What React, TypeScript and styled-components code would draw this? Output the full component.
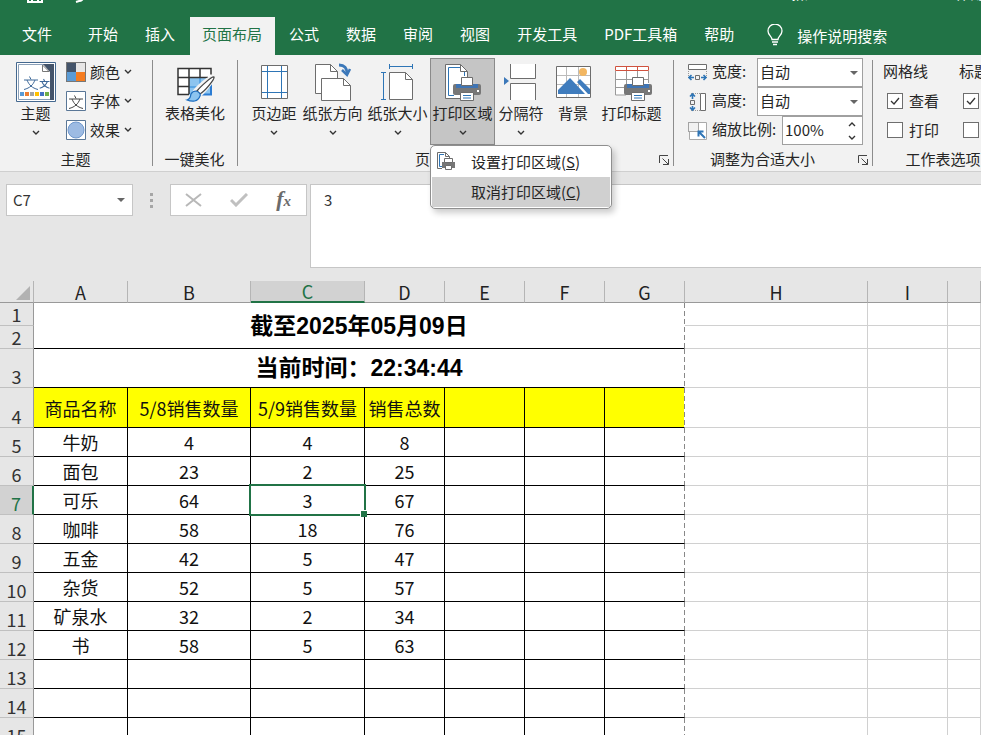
import React from 'react';
import styled, { createGlobalStyle, css } from 'styled-components';

const GREEN = '#217346';
const BLUE = '#2e75b6';
const GREY = '#6d6d6d';

const Global = createGlobalStyle`
  * { box-sizing: border-box; }
  body { margin: 0; background: #e6e6e6; }
  body, button, input, select { font-family: "Noto Sans CJK SC", "Noto Sans", sans-serif; }
  button { border: 0; padding: 0; background: none; color: inherit; font-size: inherit; }
`;

const Window = styled.div`
  display: flex; flex-direction: column; height: 100vh; overflow: hidden;
  font-size: 15px; line-height: 22px; color: #262626;
`;
const TitleBar = styled.header`
  display: flex; align-items: flex-end; flex: none; height: 17px; padding: 0 0 14px 27px;
  overflow: hidden; background: ${GREEN}; color: #fff; white-space: nowrap;
`;
const QuickTools = styled.div`display: flex; align-items: flex-end; gap: 28px; flex: 1;`;
const DocName = styled.span`width: 150px; line-height: 20px;`;
const AppName = styled.span`width: 41px; line-height: 20px;`;

const Tabs = styled.nav`
  display: flex; flex: none; height: 38px; background: ${GREEN}; color: #fff; white-space: nowrap;
`;
const Tab = styled.button<{ $active?: boolean }>`
  display: flex; justify-content: center; flex: none; height: 38px; padding: 2px 13px 0 14px; line-height: 30px;
  ${p => p.$active && css`background: #f2f2f2; color: ${GREEN}; margin-left: 2px; padding: 2px 13px 0 12px;`}
  &:first-child { padding: 2px 22px 0 22px; }
`;
const Search = styled.button`display: flex; align-items: center; gap: 14px; height: 36px; padding-left: 20px;`;

const Ribbon = styled.section`
  display: flex; flex: none; height: 117px; background: #f2f2f2;
  border-bottom: 1px solid #cfcfcf; white-space: nowrap;
`;
const Group = styled.div<{ $w: number }>`
  position: relative; display: flex; flex-direction: column; flex: none; width: ${p => p.$w}px;
  &::after { content: ''; position: absolute; right: 0; top: 5px; bottom: 5px; width: 1px; background: #8c8c8c; }
`;
const GroupBody = styled.div<{ $pad?: number }>`
  display: flex; height: 93px; padding-left: ${p => p.$pad ?? 0}px;
`;
const GroupLabel = styled.div<{ $left?: number; $right?: number }>`
  display: flex; justify-content: center; height: 22px;
  padding-left: ${p => p.$left ?? 0}px; padding-right: ${p => p.$right ?? 0}px;
`;
const Launcher = styled.button`
  position: absolute; right: 4px; bottom: 5px; width: 12px; height: 12px;
  svg { display: block; }
`;
const BigButton = styled.button<{ $w: number; $open?: boolean }>`
  display: flex; flex-direction: column; align-items: center; flex: none;
  width: ${p => p.$w}px; height: 87px; margin-top: 3px; padding-top: 3px; line-height: 22px;
  border: 1px solid ${p => (p.$open ? '#8a8a8a' : 'transparent')};
  background: ${p => (p.$open ? '#c5c5c5' : 'transparent')};
  > svg { flex: none; }
  > span { height: 28px; }
`;
const SmallList = styled.div`display: flex; flex-direction: column; padding: 2px 0 0 9px;`;
const SmallButton = styled.button`
  display: flex; align-items: center; gap: 4px; height: 29px;
`;
const MenuAnchor = styled.div`position: relative; flex: none;`;
const Menu = styled.ul`
  position: absolute; z-index: 5; left: 0; top: 90px; width: 182px; margin: 0; padding: 1px;
  list-style: none; background: #fff; border: 1px solid #8f8f8f; border-radius: 5px;
  box-shadow: 3px 4px 6px rgba(0, 0, 0, .2);
`;
const MenuItem = styled.button<{ $hot?: boolean }>`
  display: flex; align-items: center; width: 100%; height: 30px; padding: 0 0 2px 4px; gap: 13px;
  background: ${p => (p.$hot ? '#d0d0d0' : '#fff')};
`;
const IconSlot = styled.span`display: flex; width: 22px;`;

const FitList = styled.div`display: flex; flex-direction: column; padding: 3px 0 0 14px;`;
const Field = styled.label`
  display: flex; align-items: center; width: 175px; height: 29px; gap: 4px;
  > svg { flex: none; }
`;
const FieldText = styled.span`padding-bottom: 3px;`;
const Box = styled.span<{ $w: number }>`
  display: flex; align-items: center; flex: none; width: ${p => p.$w}px; height: 29px; margin-left: auto;
  background: #fff; border: 1px solid #a0a0a0; padding-right: 4px;
`;
const Select = styled.select`
  appearance: none; flex: 1; min-width: 0; height: 26px; padding: 0 2px 2px; border: 0; background: none;
  font-size: 15px; color: #262626; outline: 0;
`;
const Scale = styled.input`
  flex: 1; min-width: 0; height: 26px; padding: 0 2px 2px; border: 0; background: none; font-size: 15px; color: #262626;
`;
const Spin = styled.span`display: flex; flex-direction: column; gap: 8px; padding-right: 2px;`;

const Options = styled.div`display: flex; padding: 3px 0 0 10px;`;
const OptionCol = styled.div`display: flex; flex-direction: column; width: 76px;`;
const OptionTitle = styled.span`height: 28px; line-height: 26px;`;
const Check = styled.label`
  display: flex; align-items: center; gap: 6px; height: 29px; padding-left: 4px;
`;
const CheckBox = styled.input`
  appearance: none; flex: none; width: 16px; height: 16px; margin: 0; border: 1px solid #6e6e6e; background: #fff;
  &:checked {
    background: #fff url("data:image/svg+xml,%3Csvg xmlns='http://www.w3.org/2000/svg' viewBox='0 0 14 14'%3E%3Cpath d='M3 7l3 3 5-6' fill='none' stroke='%23333' stroke-width='1.3'/%3E%3C/svg%3E");
  }
`;

const FormulaBar = styled.section`
  display: flex; align-items: flex-start; flex: none; height: 109px; padding: 12px 0 0 6px;
`;
const NameBox = styled.div`
  display: flex; align-items: center; width: 127px; height: 32px; padding: 0 7px 0 6px;
  background: #fff; border: 1px solid #c6c6c6;
  input { flex: 1; min-width: 0; padding: 0 0 2px; border: 0; font-size: 15px; color: #333; }
`;
const Dots = styled.span`
  display: flex; flex-direction: column; gap: 3px; width: 37px; padding: 9px 0 0 17px;
  i { width: 3px; height: 3px; background: #a6a6a6; }
`;
const FxTools = styled.div`
  display: flex; align-items: center; justify-content: space-between; width: 137px; height: 32px;
  padding: 0 15px 0 14px; background: #fff; border: 1px solid #c6c6c6; margin-right: 3px;
  svg { display: block; }
`;
const Fx = styled.button`
  && { font: italic bold 22px/26px "Liberation Serif", serif; color: #6b6b6b; }
  small { font-size: 15px; }
`;
const FormulaInput = styled.input`
  flex: 1; min-width: 0; height: 84px; padding: 0 13px 54px; border: 1px solid #c6c6c6; border-right: 0;
  background: #fff; font-size: 15px; color: #333;
`;

const SheetArea = styled.main`flex: 1; min-height: 0; overflow: hidden; background: #fff;`;
const Sheet = styled.table`
  width: 100%; table-layout: fixed; border-collapse: separate; border-spacing: 0;
  font-size: 18px; line-height: 20px; color: #111;
`;
const ColHead = styled.th<{ $on?: boolean }>`
  height: 22px; padding: 0; font-weight: 400; line-height: 18px;
  color: ${p => (p.$on ? GREEN : '#222')}; background: ${p => (p.$on ? '#d2d2d2' : '#e6e6e6')};
  border-right: 1px solid #b5b5b5;
  border-bottom: ${p => (p.$on ? `2px solid ${GREEN}` : '1px solid #999')};
  svg { display: block; margin: 2px 3px 0 auto; }
`;
const RowHead = styled.th<{ $on?: boolean }>`
  padding: 0 0 2px; font-weight: 400; line-height: 18px; vertical-align: bottom;
  color: ${p => (p.$on ? GREEN : '#333')}; background: ${p => (p.$on ? '#d2d2d2' : '#e6e6e6')};
  border-right: ${p => (p.$on ? `2px solid ${GREEN}` : '1px solid #999')};
  border-bottom: 1px solid #c0c0c0;
`;
const Row = styled.tr<{ $h: number }>`height: ${p => p.$h}px;`;
const Cell = styled.td<{ $head?: boolean; $edge?: boolean }>`
  position: relative; padding: 0; text-align: center; white-space: nowrap;
  background-color: ${p => (p.$head ? '#ff0' : '#fff')};
  border-bottom: 1px solid #000;
  border-right: 1px solid #000;
  ${p => p.$edge && css`
    border-right-color: transparent;
    background-image: repeating-linear-gradient(#888 0 5px, #fff 5px 8px);
    background-origin: border-box; background-position: right top;
    background-size: 1px 100%; background-repeat: no-repeat;
  `}
`;
const Title = styled(Cell)`
  font: 700 23px/26px "Liberation Sans", "Noto Sans CJK SC", sans-serif; color: #000;
`;
const Blank = styled.td`padding: 0; border-right: 1px solid #d0d0d0; border-bottom: 1px solid #d0d0d0;`;
const Selection = styled.span`
  position: absolute; z-index: 2; inset: -2px; border: 2px solid ${GREEN};
  &::after {
    content: ''; position: absolute; right: -3px; bottom: -3px; width: 6px; height: 6px;
    background: ${GREEN}; border: solid #fff; border-width: 1px 0 0 1px;
  }
`;

const Chevron = ({ up }: { up?: boolean }) => (
  <svg width="8" height="5" viewBox="0 0 8 5" fill="none" stroke="#333" strokeWidth="1.4">
    <path d={up ? 'M1 4l3-3 3 3' : 'M1 1l3 3 3-3'} />
  </svg>
);
const Caret = () => <svg width="8" height="4" viewBox="0 0 8 4"><path d="M0 0h8L4 4z" fill="#666" /></svg>;
const LauncherIcon = () => (
  <svg width="12" height="12" viewBox="0 0 12 12" fill="none" stroke="#444"><path d="M1.500 9V1.500H10M4.500 4.500l6 6M10.500 5v5.500H5" /></svg>
);
const Wen = () => <path d="M6.500 1.500l1.500 3M1 5h14M4 5c2 5 5 8 11 9.500M12 5C10 10 7 13 1 14.500" />;

const ThemeIcon = () => (
  <svg width="40" height="40" viewBox="0 0 40 40" fill="none">
    <path d="M.5.5h39v39H.5z" fill="#fff" stroke="#44688f" />
    <path d="M2.500 2.500h35v35h-35z" fill="#fff" stroke="#8ba0b8" />
    <path d="M27 2h11v36h-4V10z" fill="#44546a" /><path d="M26.500 3v6.500H33z" stroke="#777" fill="#fff" />
    <g transform="translate(7 13)" stroke="#3d6899"><Wen /></g>
    <g transform="translate(23 16) scale(.7)" stroke="#3d6899" strokeWidth="1.500"><Wen /></g>
    <path d="M4 30h4v4H4z" fill="#5b9bd5" /><path d="M9 30h4v4H9z" fill="#ed7d31" /><path d="M14 30h4v4h-4z" fill="#a5a5a5" />
    <path d="M19 30h4v4h-4z" fill="#ffc000" /><path d="M24 30h4v4h-4z" fill="#4472c4" /><path d="M29 30h4v4h-4z" fill="#70ad47" />
  </svg>
);
const ColorsIcon = () => (
  <svg width="20" height="20" viewBox="0 0 20 20"><path d="M0 0h20v20H0z" fill="#777" /><path d="M1 1h9v9H1z" fill="#44546a" /><path d="M10 1h9v9h-9z" fill="#e7e6e6" /><path d="M1 10h9v9H1z" fill="#5b9bd5" /><path d="M10 10h9v9h-9z" fill="#f57c20" /></svg>
);
const FontsIcon = () => (
  <svg width="20" height="20" viewBox="0 0 20 20" fill="none"><path d="M.5.5h19v19H.5z" fill="#fff" stroke="#5a7797" /><g transform="translate(2 3)" stroke="#444"><Wen /></g></svg>
);
const EffectsIcon = () => (
  <svg width="20" height="20" viewBox="0 0 20 20"><path d="M.5.5h19v19H.5z" fill="#fff" stroke="#5a7797" /><circle cx="10" cy="10" r="8" fill="#9dbbe3" stroke="#7098cc" /></svg>
);
const BeautifyIcon = () => (
  <svg width="40" height="40" viewBox="0 -4 40 40" fill="none">
    <path d="M3 3h33v26H3z" fill="#fff" /><path d="M14 12h22v17H14z" fill="#8cc4ef" />
    <path d="M25 12v17M14 21h22" stroke="#2b88d8" />
    <path d="M22 28.500h14V16" stroke="#2b7cd3" strokeWidth="2" />
    <path d="M14 28.500H3v-26h33v6M3 11.500h30M3 20.500h11M14 3v25M25 3v9" stroke="#333" strokeWidth="1.500" />
    <path d="M39 11c1 2-11 17-16 20l-5-4C22 21 36 9 39 11z" fill="#fff" stroke="#f2f2f2" strokeWidth="3" />
    <path d="M39 11c1 2-9 14-14 17l-3-3C25 21 37 10 39 11z" fill="#fff" stroke="#444" strokeWidth="1.300" />
    <path d="M21 25c3 1 5 3 4 5-2 6-8 6-13 4 4-1 3-3 4-6 1-2 3-3 5-3z" fill="#8cc4ef" stroke="#1f6fc0" strokeWidth="1.200" />
  </svg>
);
const MarginsIcon = () => (
  <svg width="40" height="40" viewBox="0 0 40 40" fill="none"><path d="M7.500 3.500h26v33h-26z" fill="#fff" stroke={GREY} /><path d="M13.500 4v32M27.500 4v32M8 9.500h25M8 30.500h25" stroke={BLUE} /></svg>
);
const OrientIcon = () => (
  <svg width="40" height="40" viewBox="0 0 40 40" fill="none" stroke={GREY}>
    <path d="M8 31.500H2.500v-29h15l7 7V16" fill="#fff" /><path d="M17.500 2.500v7h7" />
    <path d="M8.500 16.500h22l7 7v15h-29z" fill="#fff" /><path d="M30.500 16.500v7h7" />
    <path d="M26 3c6 0 8 3 8 9" stroke="#3c78b9" strokeWidth="3" /><path d="M29 8l5 5 3-6" stroke="#3c78b9" strokeWidth="2.500" />
  </svg>
);
const SizeIcon = () => (
  <svg width="40" height="40" viewBox="0 0 40 40" fill="none">
    <path d="M11.500 10.500h16l7 7v20h-23z" fill="#fff" stroke={GREY} /><path d="M27.500 10.500v7h7" stroke={GREY} />
    <path d="M11.500 4.500h23M11.500 2v5M34.500 2v5M5.500 10.500v27M3 10.500h5M3 37.500h5" stroke={BLUE} />
  </svg>
);
const Printer = () => (
  <g>
    <path d="M11 22h24a2 2 0 0 1 2 2v7a2 2 0 0 1-2 2H11a2 2 0 0 1-2-2v-7a2 2 0 0 1 2-2z" fill="#777" />
    <path d="M12 22h22v4H12z" fill="#3f74b3" /><path d="M33 28h2v2h-2z" fill="#fff" />
    <path d="M17.500 15.500h11v8h-11z" fill="#fff" stroke={GREY} />
    <path d="M16.500 30.500h13v8h-13z" fill="#fff" stroke={GREY} /><path d="M19 33.500h8M19 36h8" stroke={BLUE} />
  </g>
);
const PrintAreaIcon = () => (
  <svg width="40" height="40" viewBox="0 0 40 40" fill="none">
    <path d="M2.500 2.500h15l7 7v27h-22z" fill="#fff" stroke={GREY} /><path d="M17.500 2.500v7h7" stroke={GREY} /><path d="M17 5.500H5.500v28H11M21.500 10v4" stroke={BLUE} />
    <g transform="translate(1)"><Printer /></g>
  </svg>
);
const PrintAreaSmallIcon = () => (
  <svg width="20" height="20" viewBox="0 0 20 20" fill="none">
    <path d="M6 17.500H1.500v-16h8l4 4V8" fill="#fff" stroke={GREY} /><path d="M9.500 1.500v4h4" stroke={GREY} /><path d="M8 3.500H3.500v12H6" stroke={BLUE} />
    <path d="M6 11h13v6H6z" fill="#777" /><path d="M8.500 7.500h8v4h-8z" fill="#fff" stroke={GREY} /><path d="M9.500 14.500h6v4h-6z" fill="#fff" stroke={GREY} />
  </svg>
);
const BreaksIcon = () => (
  <svg width="40" height="40" viewBox="0 0 40 40" fill="none">
    <path d="M10 2h25v14H10zM10 22h25v16H10z" fill="#fff" /><path d="M9.500 2v14.500h25V2M9.500 38V21.500h25V38" stroke={GREY} />
    <path d="M3 15l5 4-5 4z" fill="#3c78b9" />
  </svg>
);
const BackgroundIcon = () => (
  <svg width="40" height="40" viewBox="0 0 40 40" fill="none">
    <path d="M3.500 4.500h34v31h-34z" fill="#fff" stroke={GREY} /><path d="M13.500 5v30M25.500 5v30M4 13.500h33M4 22.500h33" stroke="#bbb" />
    <circle cx="30" cy="10" r="4" fill="#f2b661" /><path d="M5 32v-4l12-12 15 16zM24 20l3-3 10 10v5h-2z" fill="#3f7cbd" />
  </svg>
);
const TitlesIcon = () => (
  <svg width="40" height="40" viewBox="0 0 40 40" fill="none">
    <path d="M3 4h34v29H3z" fill="#fff" /><path d="M3.500 9v24H14M3.500 17.500H37M3.500 25.500H15M14.500 9v17M25.500 9v6M36.500 9v12" stroke="#999" />
    <path d="M3.500 4.500h33v4h-33zM14.500 4v5M25.500 4v5" stroke="#d0523f" /><g transform="translate(3)"><Printer /></g>
  </svg>
);
const WidthIcon = () => (
  <svg width="20" height="20" viewBox="0 0 20 20" fill="none"><path d="M.5 1.500h18v5H.5z" fill="#fff" stroke={GREY} /><path d="M.5 8v8M18.500 8v8" stroke="#999" strokeDasharray="1 1" /><path d="M7.500 12.500h4v4h-4z" stroke={GREY} /><path d="M6 14.500H1M3.500 12L1 14.500 3.500 17M13 14.500h5M15.500 12l2.500 2.500-2.500 2.500" stroke={BLUE} strokeWidth="1.600" /></svg>
);
const HeightIcon = () => (
  <svg width="20" height="20" viewBox="0 0 20 20" fill="none"><path d="M12.500 1.500h5v17h-5z" fill="#fff" stroke={GREY} /><path d="M3 1.500h9M3 18.500h9" stroke="#999" strokeDasharray="1 1" /><path d="M2.500 8.500h4v4h-4z" stroke={GREY} /><path d="M4.500 7V2M2 4.500L4.500 2 7 4.500M4.500 14v4M2 15.500L4.500 18 7 15.500" stroke={BLUE} strokeWidth="1.600" /></svg>
);
const ScaleIcon = () => (
  <svg width="20" height="20" viewBox="0 0 20 20" fill="none"><path d="M1.500 11v7.500h17v-17H11" fill="#fff" stroke="#aaa" /><path d="M.5 1.500h10v9H.5z" fill="#f2f2f2" stroke="#555" strokeDasharray="1 1" /><path d="M17 17l-6-6M10.500 15.500v-5h5" stroke={BLUE} strokeWidth="2" /></svg>
);

const COLS = [34, 94, 123, 114, 80, 80, 80, 80, 183, 80];
const ROWS: [number, string[]][] = [
  [5, ['牛奶', '4', '4', '8']], [6, ['面包', '23', '2', '25']], [7, ['可乐', '64', '3', '67']],
  [8, ['咖啡', '58', '18', '76']], [9, ['五金', '42', '5', '47']], [10, ['杂货', '52', '5', '57']],
  [11, ['矿泉水', '32', '2', '34']], [12, ['书', '58', '5', '63']], [13, []], [14, []], [15, []],
];
const SEVEN = [0, 1, 2, 3, 4, 5, 6];
const Blanks = () => <><Blank /><Blank /><Blank /></>;

export default function App() {
  return (
    <Window>
      <Global />
      <TitleBar>
        <QuickTools>
          <svg width="16" height="16" viewBox="0 0 16 16" fill="none" stroke="#fff" strokeWidth="2"><path d="M1 1h14v14H1zM5 15v-5h6v5" /></svg>
          <svg width="14" height="16" viewBox="0 0 14 16" fill="none" stroke="#fff" strokeWidth="2"><path d="M1 5h7a4 4 0 0 1 0 9L5 15M5 1L1 5l4 4" /></svg>
        </QuickTools>
        <DocName>新建</DocName>
        <AppName>工作簿</AppName>
      </TitleBar>
      <Tabs>
        <Tab>文件</Tab><Tab>开始</Tab><Tab>插入</Tab><Tab $active>页面布局</Tab><Tab>公式</Tab><Tab>数据</Tab>
        <Tab>审阅</Tab><Tab>视图</Tab><Tab>开发工具</Tab><Tab>PDF工具箱</Tab><Tab>帮助</Tab>
        <Search>
          <svg width="16" height="22" viewBox="0 0 16 22" fill="none" stroke="#fff" strokeWidth="1.300"><path d="M5 15.500c0-3-4-4.500-4-8.500a7 7 0 0 1 14 0c0 4-4 5.500-4 8.500zM5 18h6M6 20.500h4" /></svg>
          操作说明搜索
        </Search>
      </Tabs>
      <Ribbon>
        <Group $w={153}>
          <GroupBody $pad={14}>
            <BigButton $w={43}><ThemeIcon /><span>主题</span><Chevron /></BigButton>
            <SmallList>
              <SmallButton><ColorsIcon />颜色 <Chevron /></SmallButton>
              <SmallButton><FontsIcon />字体 <Chevron /></SmallButton>
              <SmallButton><EffectsIcon />效果 <Chevron /></SmallButton>
            </SmallList>
          </GroupBody>
          <GroupLabel $right={2}>主题</GroupLabel>
        </Group>
        <Group $w={85}>
          <GroupBody $pad={7}><BigButton $w={70}><BeautifyIcon /><span>表格美化</span></BigButton></GroupBody>
          <GroupLabel $right={2}>一键美化</GroupLabel>
        </Group>
        <Group $w={436}>
          <GroupBody $pad={10}>
            <BigButton $w={52}><MarginsIcon /><span>页边距</span><Chevron /></BigButton>
            <BigButton $w={65}><OrientIcon /><span>纸张方向</span><Chevron /></BigButton>
            <BigButton $w={65}><SizeIcon /><span>纸张大小</span><Chevron /></BigButton>
            <MenuAnchor>
              <BigButton $w={65} $open><PrintAreaIcon /><span>打印区域</span><Chevron /></BigButton>
              <Menu>
                <li><MenuItem><IconSlot><PrintAreaSmallIcon /></IconSlot><span>设置打印区域(<u>S</u>)</span></MenuItem></li>
                <li><MenuItem $hot><IconSlot /><span>取消打印区域(<u>C</u>)</span></MenuItem></li>
              </Menu>
            </MenuAnchor>
            <BigButton $w={52}><BreaksIcon /><span>分隔符</span><Chevron /></BigButton>
            <BigButton $w={52}><BackgroundIcon /><span>背景</span></BigButton>
            <BigButton $w={65}><TitlesIcon /><span>打印标题</span></BigButton>
          </GroupBody>
          <GroupLabel $right={22}>页面设置</GroupLabel>
          <Launcher aria-label="页面设置"><LauncherIcon /></Launcher>
        </Group>
        <Group $w={199}>
          <GroupBody>
            <FitList>
              <Field><WidthIcon /><FieldText>宽度:</FieldText><Box $w={106}><Select><option>自动</option></Select><Caret /></Box></Field>
              <Field><HeightIcon /><FieldText>高度:</FieldText><Box $w={106}><Select><option>自动</option></Select><Caret /></Box></Field>
              <Field><ScaleIcon /><FieldText>缩放比例:</FieldText><Box $w={81}><Scale defaultValue="100%" /><Spin><Chevron up /><Chevron /></Spin></Box></Field>
            </FitList>
          </GroupBody>
          <GroupLabel $right={22}>调整为合适大小</GroupLabel>
          <Launcher aria-label="调整为合适大小"><LauncherIcon /></Launcher>
        </Group>
        <Group $w={160}>
          <GroupBody>
            <Options>
              <OptionCol>
                <OptionTitle>网格线</OptionTitle>
                <Check><CheckBox type="checkbox" defaultChecked />查看</Check>
                <Check><CheckBox type="checkbox" />打印</Check>
              </OptionCol>
              <OptionCol>
                <OptionTitle>标题</OptionTitle>
                <Check><CheckBox type="checkbox" defaultChecked />查看</Check>
                <Check><CheckBox type="checkbox" />打印</Check>
              </OptionCol>
            </Options>
          </GroupBody>
          <GroupLabel $right={20}>工作表选项</GroupLabel>
        </Group>
      </Ribbon>
      <FormulaBar>
        <NameBox><input aria-label="名称框" defaultValue="C7" /><Caret /></NameBox>
        <Dots><i /><i /><i /></Dots>
        <FxTools>
          <button aria-label="取消"><svg width="17" height="14" viewBox="0 0 17 14" stroke="#b8b8b8" strokeWidth="2"><path d="M1 1l15 12M16 1L1 13" /></svg></button>
          <button aria-label="输入"><svg width="18" height="14" viewBox="0 0 18 14" fill="none" stroke="#c0c0c0" strokeWidth="3"><path d="M1 7l5 5L17 1" /></svg></button>
          <Fx aria-label="插入函数">f<small>x</small></Fx>
        </FxTools>
        <FormulaInput aria-label="编辑栏" defaultValue="3" />
      </FormulaBar>
      <SheetArea>
        <Sheet>
          <colgroup>{COLS.map((w, i) => <col key={i} width={w} />)}<col /></colgroup>
          <thead>
            <tr>
              <ColHead><svg width="14" height="14" viewBox="0 0 14 14"><path d="M14 0v14H0z" fill="#b2b2b2" /></svg></ColHead>
              {'ABCDEFGHI'.split('').map(c => <ColHead key={c} $on={c === 'C'}>{c}</ColHead>)}<ColHead />
            </tr>
          </thead>
          <tbody>
            <Row $h={23}><RowHead>1</RowHead><Title colSpan={7} rowSpan={2} $edge>截至2025年05月09日</Title><Blanks /></Row>
            <Row $h={23}><RowHead>2</RowHead><Blanks /></Row>
            <Row $h={39}><RowHead>3</RowHead><Title colSpan={7} $edge>当前时间：22:34:44</Title><Blanks /></Row>
            <Row $h={40}>
              <RowHead>4</RowHead>
              {SEVEN.map(i => <Cell key={i} $head $edge={i === 6}>{['商品名称', '5/8销售数量', '5/9销售数量', '销售总数'][i]}</Cell>)}<Blanks />
            </Row>
            {ROWS.map(([n, cells]) => (
              <Row key={n} $h={29}>
                <RowHead $on={n === 7}>{n}</RowHead>
                {SEVEN.map(i => <Cell key={i} $edge={i === 6}>{cells[i]}{n === 7 && i === 2 && <Selection />}</Cell>)}<Blanks />
              </Row>
            ))}
          </tbody>
        </Sheet>
      </SheetArea>
    </Window>
  );
}
